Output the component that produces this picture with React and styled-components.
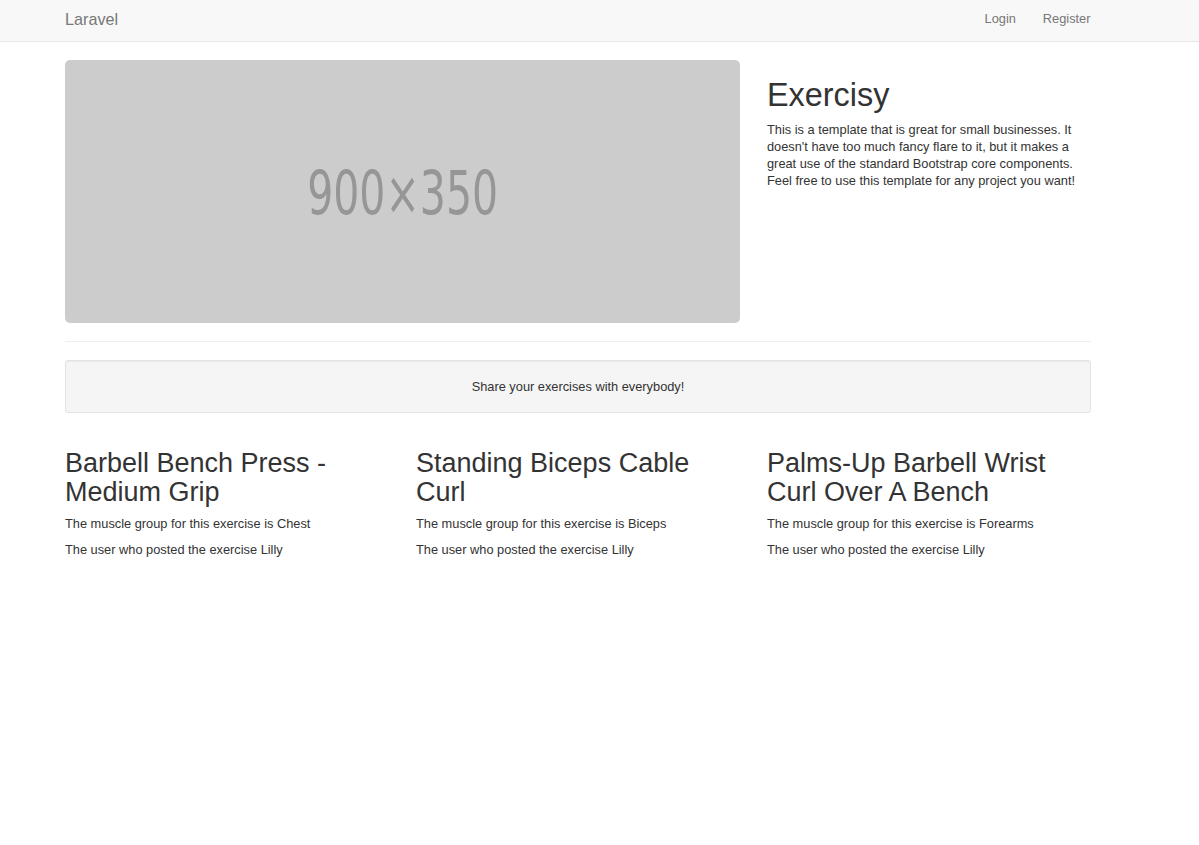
import React from 'react'
import styled, { createGlobalStyle } from 'styled-components'

const exercises = [
    { name: 'Barbell Bench Press - Medium Grip', group: 'Chest', user: 'Lilly' },
    { name: 'Standing Biceps Cable Curl', group: 'Biceps', user: 'Lilly' },
    { name: 'Palms-Up Barbell Wrist Curl Over A Bench', group: 'Forearms', user: 'Lilly' },
]

function App() {
    return (
        <>
            <GlobalStyle />
            <Navbar>
                <NavInner>
                    <Brand href="#">Laravel</Brand>
                    <NavLinks>
                        <NavLink href="#">Login</NavLink>
                        <NavLink href="#">Register</NavLink>
                    </NavLinks>
                </NavInner>
            </Navbar>
            <Container>
                <Hero>
                    <Placeholder>
                        <PlaceholderText>900×350</PlaceholderText>
                    </Placeholder>
                    <Intro>
                        <Title>Exercisy</Title>
                        <Text>
                            This is a template that is great for small businesses. It doesn't have too much fancy
                            flare to it, but it makes a great use of the standard Bootstrap core components. Feel
                            free to use this template for any project you want!
                        </Text>
                    </Intro>
                </Hero>
                <Rule />
                <Well>Share your exercises with everybody!</Well>
                <Cards>
                    {exercises.map(ex => (
                        <Card key={ex.name}>
                            <CardTitle>{ex.name}</CardTitle>
                            <Text>The muscle group for this exercise is {ex.group}</Text>
                            <Text>The user who posted the exercise {ex.user}</Text>
                        </Card>
                    ))}
                </Cards>
            </Container>
        </>
    )
}

export default App

const GlobalStyle = createGlobalStyle`
    body {
        margin: 0;
        background: #fff;
        color: #333;
        font-family: "Liberation Sans", Arial, sans-serif;
        font-size: 12.8px;
        line-height: 17px;
    }
`

const Navbar = styled.nav`
    background: #f8f8f8;
    border-bottom: 1px solid #e7e7e7;
    height: 41px;
`

const NavInner = styled.div`
    width: 1026px;
    margin-left: 65px;
    height: 100%;
    display: flex;
    align-items: center;
    justify-content: space-between;
`

const Brand = styled.a`
    color: #777;
    font-size: 16.2px;
    text-decoration: none;
    margin-top: -2px;
`

const NavLinks = styled.div`
    display: flex;
    margin-right: -13px;
    margin-top: -4px;
`

const NavLink = styled.a`
    color: #777;
    text-decoration: none;
    padding: 0 13.5px;
`

const Container = styled.div`
    width: 1026px;
    margin-left: 65px;
`

const Hero = styled.div`
    display: grid;
    grid-template-columns: 675px 1fr;
    column-gap: 27px;
    margin-top: 18px;
`

const Placeholder = styled.div`
    height: 263px;
    background: #ccc;
    border-radius: 5px;
    display: flex;
    align-items: center;
    justify-content: center;
`

const PlaceholderText = styled.span`
    font-family: "Liberation Sans Narrow", "DejaVu Sans Condensed", sans-serif;
    font-size: 60px;
    line-height: 1;
    color: #969696;
    display: inline-block;
    transform: scaleX(0.76);
    margin-top: 2px;
`

const Intro = styled.div``

const Title = styled.h1`
    font-size: 32.4px;
    font-weight: normal;
    line-height: 1.1;
    margin: 18px 0 7px;
`

const Text = styled.p`
    margin: 0 0 9px;
`

const Rule = styled.hr`
    border: 0;
    border-top: 1px solid #eee;
    margin: 18px 0;
`

const Well = styled.div`
    background: #f5f5f5;
    border: 1px solid #e3e3e3;
    border-radius: 3px;
    box-shadow: inset 0 1px 1px rgba(0, 0, 0, 0.05);
    padding: 17px;
    text-align: center;
    margin-bottom: 18px;
`

const Cards = styled.div`
    display: grid;
    grid-template-columns: repeat(3, 324px);
    column-gap: 27px;
`

const Card = styled.div``

const CardTitle = styled.h2`
    font-size: 27px;
    font-weight: normal;
    line-height: 29px;
    margin: 18px 0 8px;
`
